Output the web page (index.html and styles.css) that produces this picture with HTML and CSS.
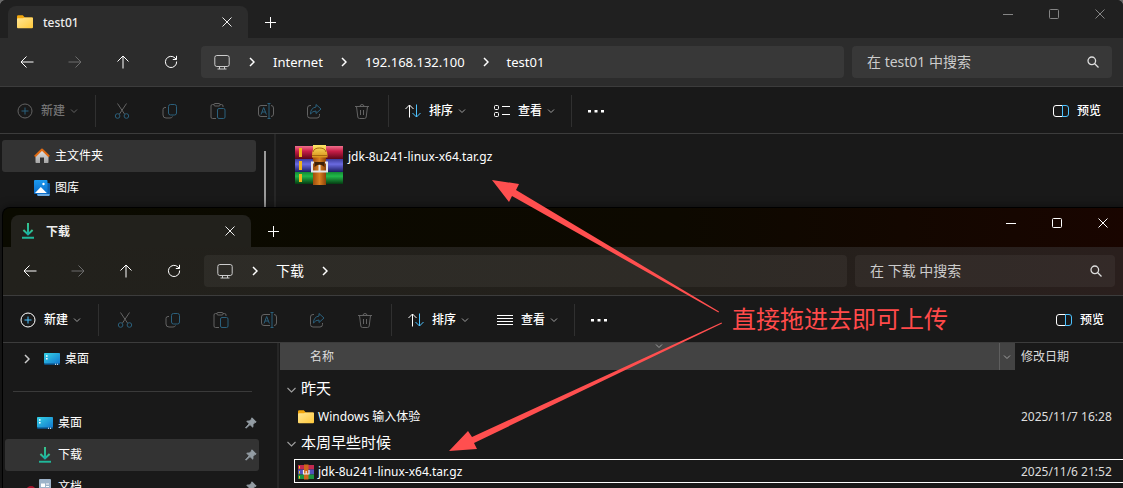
FILE: index.html
```html
<!DOCTYPE html>
<html lang="zh-CN">
<head>
    <meta charset="UTF-8">
    <meta name="viewport" content="width=device-width, initial-scale=1.0">
    <title>test01</title>
    <link rel="stylesheet" href="styles.css">
</head>
<body>
    <!-- 图标 -->
    <svg class="sprite" aria-hidden="true">
        <defs>
            <linearGradient id="g-folder" x1="0" y1="0" x2="1" y2="1"><stop offset="0" stop-color="#ffe694"/><stop offset="1" stop-color="#ffc83a"/></linearGradient>
            <linearGradient id="g-down" x1="0" y1="0" x2="0" y2="1"><stop offset="0" stop-color="#3ac48a"/><stop offset="1" stop-color="#16b0a6"/></linearGradient>
            <linearGradient id="g-desk" x1="0" y1="0" x2="1" y2="1"><stop offset="0" stop-color="#35d3e6"/><stop offset="1" stop-color="#1277cf"/></linearGradient>
            <linearGradient id="g-home" x1="0" y1="0" x2="0" y2="1"><stop offset="0" stop-color="#e6e6e6"/><stop offset="1" stop-color="#a5a5a5"/></linearGradient>
            <linearGradient id="g-pic" x1="0" y1="0" x2="0" y2="1"><stop offset="0" stop-color="#1c9af0"/><stop offset="1" stop-color="#0a6cc8"/></linearGradient>
            <linearGradient id="g-red" x1="0" y1="0" x2="0" y2="1"><stop offset="0" stop-color="#f0708c"/><stop offset=".4" stop-color="#c81e48"/><stop offset="1" stop-color="#5c0618"/></linearGradient>
            <linearGradient id="g-blue" x1="0" y1="0" x2="0" y2="1"><stop offset="0" stop-color="#3c3c9c"/><stop offset=".4" stop-color="#6a6ae0"/><stop offset="1" stop-color="#1c1c60"/></linearGradient>
            <linearGradient id="g-green" x1="0" y1="0" x2="0" y2="1"><stop offset="0" stop-color="#128a34"/><stop offset=".35" stop-color="#22b84a"/><stop offset="1" stop-color="#053c12"/></linearGradient>
            <linearGradient id="g-belt" x1="0" y1="0" x2="1" y2="0"><stop offset="0" stop-color="#9c4c0c"/><stop offset=".5" stop-color="#d88020"/><stop offset="1" stop-color="#8c420a"/></linearGradient>
            <linearGradient id="g-gold" x1="0" y1="0" x2="0" y2="1"><stop offset="0" stop-color="#ffe868"/><stop offset="1" stop-color="#d89018"/></linearGradient>
        </defs>
        <symbol id="folder" viewBox="0 0 16 14">
            <path d="M0 1.5Q0 .3 1.2.3h4.6l2 2.2H15q1 0 1 1V7H0z" fill="#f2a60c"/>
            <path d="M0 4.2Q0 3.3 1 3.3h5L7.6 2.6H15q1 0 1 1v8.7q0 1-1 1H1q-1 0-1-1z" fill="url(#g-folder)"/>
        </symbol>
        <symbol id="download" viewBox="0 0 16 16">
            <path d="M3.400 7 8 11.400 12.600 7" fill="none" stroke="url(#g-down)" stroke-width="2"/>
            <path d="M2 13.800h12v1.900H2z" fill="#20b89a"/>
            <path d="M7 0h2v11H7z" fill="url(#g-down)"/>
        </symbol>
        <symbol id="desktop" viewBox="0 0 16 12">
            <rect width="16" height="12" rx="1" fill="#0a4a7c"/>
            <rect width="16" height="10.6" rx="1" fill="url(#g-desk)"/>
            <path d="M2 2.2h1.6v1.6H2zM2 5h1.6v1.6H2zM11 10.800h1v1h-1zM13 10.800h1v1h-1z" fill="#fff"/>
        </symbol>
        <symbol id="home" viewBox="0 0 16 16">
            <path d="M1.5 7.5 8 1.5l6.5 6v6.7q0 .8-.8.8H10V9.5H6V15H2.3q-.8 0-.8-.8z" fill="url(#g-home)"/>
            <path d="M.8 8.4 8 1.6l7.2 6.8" fill="none" stroke="#e06a12" stroke-width="2" stroke-linejoin="round"/>
        </symbol>
        <symbol id="gallery" viewBox="0 0 16 16">
            <path d="M3 3h12q1 0 1 1v11q0 1-1 1H4q-1 0-1-1z" fill="#0c5fae"/>
            <path d="M3 14h12.8L15 16H4z" fill="#6aa8e0"/>
            <rect width="13.5" height="14" rx="1" fill="url(#g-pic)"/>
            <path d="M1 13 6.8 7l6 6z" fill="#fff"/>
            <circle cx="9.5" cy="4" r="1.2" fill="#fff"/>
        </symbol>
        <symbol id="doc" viewBox="0 0 16 16">
            <rect x="2" width="12" height="16" rx="1" fill="#9db3c9"/>
            <path d="M4 4.5h4v3.5H4zM9 4.5h3v1H9zM9 7h3v1H9zM4 10h8v1H4z" fill="#fff"/>
        </symbol>
        <symbol id="pin" viewBox="0 0 12 12">
            <path d="M7 .8 11.2 5 9.8 5.6 8 7.4l-.2 2.8L5 7.6 1 11.2.6 10.8 4.2 6.8 1.8 4.2 4.6 4 6.4 2.2z" fill="#939ca3" stroke="#939ca3"/>
        </symbol>
        <symbol id="rar" viewBox="0 0 48 40">
            <rect y="1" width="48" height="13" fill="url(#g-red)"/>
            <rect y="14" width="48" height="13" fill="url(#g-blue)"/>
            <rect y="27" width="48" height="12" fill="url(#g-green)"/>
            <path d="M4 3h3v9H4zM4 16h3v9H4zM4 29h3v8H4z" fill="#f0b41c"/>
            <rect x="18" width="13" height="40" fill="url(#g-belt)"/>
            <path d="M18 0h13v5q1.500 2 1.500 5v2.500H17V10q0-3 1-5z" fill="url(#g-gold)"/>
            <path d="M18 7q1-4 6.500-4T31 7M17 10.500h15.500" fill="none" stroke="#a86a10"/>
            <path d="M19 17.500h-2v9h15v-9h-2" fill="none" stroke="#e4e4e8" stroke-width="2"/>
            <path d="M19.500 17v5q5-5 10 0v-5z" fill="#3c2008"/>
            <path d="M24.500 20v7" stroke="#e4e4e8" stroke-width="2"/>
        </symbol>
        <symbol id="rar-small" viewBox="0 0 16 16">
            <path d="M0 1h16v4.500H0z" fill="#c42a50"/><path d="M0 5.500h16v5H0z" fill="#5252bc"/><path d="M0 10.500h16V15H0z" fill="#1c9440"/>
            <path d="M1 2h1v2.500H1zM1 7h1v2.500H1zM1 12h1v2.500H1z" fill="#f4c020"/>
            <path d="M6 .5h4.500v15H6z" fill="#d0661c"/>
            <path d="M5.500 6v4h5.500V6M8.200 7v3" fill="none" stroke="#eee" stroke-width="1.200"/>
        </symbol>
        <symbol id="close" viewBox="0 0 10 10"><path d="M.5.5l9 9M9.500.5l-9 9"/></symbol>
        <symbol id="plus" viewBox="0 0 11 11"><path d="M5.500 0v11M0 5.500h11"/></symbol>
        <symbol id="min" viewBox="0 0 10 10"><path d="M0 5.500h10"/></symbol>
        <symbol id="max" viewBox="0 0 10 10"><rect x=".5" y=".5" width="9" height="9" rx="1"/></symbol>
        <symbol id="left" viewBox="0 0 14 12"><path d="M13.500 6H1M6.500.5 1 6l5.500 5.500"/></symbol>
        <symbol id="right" viewBox="0 0 14 12"><path d="M.5 6H13M7.500.5 13 6l-5.500 5.500"/></symbol>
        <symbol id="up" viewBox="0 0 12 14"><path d="M6 13.500V1M.5 6.500 6 1l5.500 5.500"/></symbol>
        <symbol id="refresh" viewBox="0 0 14 14"><path d="M12.600 6.500A5.600 5.600 0 1 1 11 3l1.400 1.500M12.500.8v3.700H8.800"/></symbol>
        <symbol id="monitor" viewBox="0 0 16 16"><rect x=".8" y="1.500" width="14.400" height="11" rx="2"/><path d="M5.500 13v2M10.500 13v2M3.500 15h9"/></symbol>
        <symbol id="chev-r" viewBox="0 0 6 10"><path d="M1 1l4 4-4 4"/></symbol>
        <symbol id="chev-d" viewBox="0 0 8 6"><path d="M1 1.500l3 3 3-3"/></symbol>
        <symbol id="search" viewBox="0 0 12 12"><circle cx="4.800" cy="4.800" r="3.800"/><path d="M7.500 7.500l4 4"/></symbol>
        <symbol id="new" viewBox="0 0 16 16"><circle cx="8" cy="8" r="7"/><path class="accent" d="M8 4.500v7M4.500 8h7"/></symbol>
        <symbol id="cut" viewBox="0 0 16 16"><path d="M3.500.5l7 10.500M12.500.5l-7 10.500"/><circle class="accent" cx="3.600" cy="13" r="2.300"/><circle class="accent" cx="12.400" cy="13" r="2.300"/></symbol>
        <symbol id="copy" viewBox="0 0 16 16"><path d="M4 4.500H3q-2 0-2 2V12q0 3 3 3h4q2 0 2.500-1.500"/><rect class="accent" x="6.500" y="1.500" width="8" height="10.500" rx="2"/></symbol>
        <symbol id="paste" viewBox="0 0 16 16"><path d="M6 15.500H2.500q-1.500 0-1.500-1.500V3q0-1.500 1.500-1.500H4M10 1.500h1.500Q13 1.500 13 3v1"/><rect x="4" y=".5" width="6" height="2.500" rx="1"/><rect class="accent" x="7.500" y="5.500" width="7.500" height="10" rx="1.500"/></symbol>
        <symbol id="rename" viewBox="0 0 16 16"><path d="M9 2.500H3q-2.500 0-2.500 2.500v6q0 2.500 2.500 2.500h6M13 2.500q2.500 0 2.500 2.500v6q0 2.500-2.500 2.500"/><path class="accent" d="M11 .5v15M9.500.5h3M9.500 15.500h3M3 11.500 5.700 4.500 8.400 11.500M4 9h3.400"/></symbol>
        <symbol id="share" viewBox="0 0 16 16"><path d="M5 2.500H4Q1.500 2.500 1.500 5v7.500Q1.500 15 4 15h7q2.500 0 2.500-2.500V11"/><path class="accent" d="M10 1.500 15 6l-5 4.500V8Q6.500 8 4.500 11q0-6 5.500-7z"/></symbol>
        <symbol id="trash" viewBox="0 0 16 16"><path d="M1 3.500h14M6 3.500q0-2 2-2t2 2M2.500 3.500 3.800 14q.2 1.500 1.700 1.500h5q1.500 0 1.700-1.500l1.300-10.500M6.500 7v5M9.500 7v5"/></symbol>
        <symbol id="sort" viewBox="0 0 16 14"><path d="M4.500 13.500V1M.5 5l4-4 4 4"/><path class="accent" d="M11.500.5V13M7.500 9l4 4 4-4"/></symbol>
        <symbol id="tiles" viewBox="0 0 16 14"><rect x=".5" y="1.500" width="4" height="4" rx="1"/><rect x=".5" y="8.500" width="4" height="4" rx="1"/><path d="M8 2.500h8M8 10.500h8"/></symbol>
        <symbol id="lines" viewBox="0 0 16 14"><path d="M0 2.500h16M0 5.500h16M0 8.500h16M0 11.500h16"/></symbol>
        <symbol id="dots" viewBox="0 0 16 4"><path class="dot" d="M0 1h3v2.500H0zM6.500 1h3v2.500h-3zM13 1h3v2.500h-3z"/></symbol>
        <symbol id="pane" viewBox="0 0 16 12"><path d="M9.500.5H3Q.5.500.5 3v6Q.5 11.500 3 11.500h6.500"/><path class="accent" d="M9.500.5H13q2.500 0 2.500 2.500v6q0 2.500-2.500 2.500H9.500z"/></symbol>
    </svg>

    <!-- 后面的窗口 -->
    <section class="window back">
        <header class="titlebar">
            <div class="tab">
                <svg class="i16"><use href="#folder"/></svg>
                <span class="tab-name">test01</span>
                <button class="tab-close" aria-label="关闭标签页"><svg class="line i10"><use href="#close"/></svg></button>
            </div>
            <button class="add" aria-label="新标签页"><svg class="line i11"><use href="#plus"/></svg></button>
            <div class="controls">
                <button aria-label="最小化"><svg class="line i10"><use href="#min"/></svg></button>
                <button aria-label="最大化"><svg class="line i10"><use href="#max"/></svg></button>
                <button aria-label="关闭"><svg class="line i10"><use href="#close"/></svg></button>
            </div>
        </header>
        <div class="navbar">
            <button aria-label="后退"><svg class="line i14"><use href="#left"/></svg></button>
            <button aria-label="前进" disabled><svg class="line i14"><use href="#right"/></svg></button>
            <button aria-label="上移"><svg class="line i14"><use href="#up"/></svg></button>
            <button aria-label="刷新"><svg class="line i14"><use href="#refresh"/></svg></button>
            <nav class="address">
                <svg class="line i16"><use href="#monitor"/></svg>
                <svg class="line chev"><use href="#chev-r"/></svg>
                <a href="#">Internet</a>
                <svg class="line chev"><use href="#chev-r"/></svg>
                <a href="#">192.168.132.100</a>
                <svg class="line chev"><use href="#chev-r"/></svg>
                <a href="#">test01</a>
            </nav>
            <label class="search">
                <input type="text" placeholder="在 test01 中搜索" aria-label="搜索">
                <svg class="line i12"><use href="#search"/></svg>
            </label>
        </div>
        <div class="toolbar">
            <button class="cmd new" disabled><svg class="line i16"><use href="#new"/></svg>新建<svg class="line down"><use href="#chev-d"/></svg></button>
            <div class="group">
                <button aria-label="剪切" disabled><svg class="line i16"><use href="#cut"/></svg></button>
                <button aria-label="复制" disabled><svg class="line i16"><use href="#copy"/></svg></button>
                <button aria-label="粘贴" disabled><svg class="line i16"><use href="#paste"/></svg></button>
                <button aria-label="重命名" disabled><svg class="line i16"><use href="#rename"/></svg></button>
                <button aria-label="共享" disabled><svg class="line i16"><use href="#share"/></svg></button>
                <button aria-label="删除" disabled><svg class="line i16"><use href="#trash"/></svg></button>
            </div>
            <div class="group cmds">
                <button class="cmd"><svg class="line i16"><use href="#sort"/></svg>排序<svg class="line down"><use href="#chev-d"/></svg></button>
                <button class="cmd"><svg class="line i16"><use href="#tiles"/></svg>查看<svg class="line down"><use href="#chev-d"/></svg></button>
            </div>
            <div class="group more">
                <button aria-label="更多"><svg class="i16"><use href="#dots"/></svg></button>
            </div>
            <button class="cmd preview"><svg class="line i16"><use href="#pane"/></svg>预览</button>
        </div>
        <div class="content">
            <aside class="side">
                <a class="item on" href="#"><svg class="i16"><use href="#home"/></svg>主文件夹</a>
                <a class="item" href="#"><svg class="i16"><use href="#gallery"/></svg>图库</a>
                <div class="scroll"></div>
            </aside>
            <main class="tiles">
                <a class="file" href="#"><svg class="big"><use href="#rar"/></svg>jdk-8u241-linux-x64.tar.gz</a>
            </main>
        </div>
    </section>

    <!-- 前面的窗口 -->
    <section class="window front">
        <header class="titlebar">
            <div class="tab">
                <svg class="i16"><use href="#download"/></svg>
                <span class="tab-name">下载</span>
                <button class="tab-close" aria-label="关闭标签页"><svg class="line i10"><use href="#close"/></svg></button>
            </div>
            <button class="add" aria-label="新标签页"><svg class="line i11"><use href="#plus"/></svg></button>
            <div class="controls">
                <button aria-label="最小化"><svg class="line i10"><use href="#min"/></svg></button>
                <button aria-label="最大化"><svg class="line i10"><use href="#max"/></svg></button>
                <button aria-label="关闭"><svg class="line i10"><use href="#close"/></svg></button>
            </div>
        </header>
        <div class="navbar">
            <button aria-label="后退"><svg class="line i14"><use href="#left"/></svg></button>
            <button aria-label="前进" disabled><svg class="line i14"><use href="#right"/></svg></button>
            <button aria-label="上移"><svg class="line i14"><use href="#up"/></svg></button>
            <button aria-label="刷新"><svg class="line i14"><use href="#refresh"/></svg></button>
            <nav class="address">
                <svg class="line i16"><use href="#monitor"/></svg>
                <svg class="line chev"><use href="#chev-r"/></svg>
                <a class="cn" href="#">下载</a>
                <svg class="line chev"><use href="#chev-r"/></svg>
            </nav>
            <label class="search">
                <input type="text" placeholder="在 下载 中搜索" aria-label="搜索">
                <svg class="line i12"><use href="#search"/></svg>
            </label>
        </div>
        <div class="toolbar">
            <button class="cmd new"><svg class="line i16"><use href="#new"/></svg>新建<svg class="line down"><use href="#chev-d"/></svg></button>
            <div class="group">
                <button aria-label="剪切" disabled><svg class="line i16"><use href="#cut"/></svg></button>
                <button aria-label="复制" disabled><svg class="line i16"><use href="#copy"/></svg></button>
                <button aria-label="粘贴" disabled><svg class="line i16"><use href="#paste"/></svg></button>
                <button aria-label="重命名" disabled><svg class="line i16"><use href="#rename"/></svg></button>
                <button aria-label="共享" disabled><svg class="line i16"><use href="#share"/></svg></button>
                <button aria-label="删除" disabled><svg class="line i16"><use href="#trash"/></svg></button>
            </div>
            <div class="group cmds">
                <button class="cmd"><svg class="line i16"><use href="#sort"/></svg>排序<svg class="line down"><use href="#chev-d"/></svg></button>
                <button class="cmd"><svg class="line i16"><use href="#lines"/></svg>查看<svg class="line down"><use href="#chev-d"/></svg></button>
            </div>
            <div class="group more">
                <button aria-label="更多"><svg class="i16"><use href="#dots"/></svg></button>
            </div>
            <button class="cmd preview"><svg class="line i16"><use href="#pane"/></svg>预览</button>
        </div>
        <div class="content">
            <aside class="side">
                <a class="item tree" href="#"><svg class="line chev"><use href="#chev-r"/></svg><svg class="i16"><use href="#desktop"/></svg>桌面</a>
                <hr>
                <a class="item" href="#"><svg class="i16"><use href="#desktop"/></svg>桌面<svg class="pin"><use href="#pin"/></svg></a>
                <a class="item on" href="#"><svg class="i16"><use href="#download"/></svg>下载<svg class="pin"><use href="#pin"/></svg></a>
                <a class="item" href="#"><svg class="i16"><use href="#doc"/></svg>文档<svg class="pin"><use href="#pin"/></svg><i class="badge"></i></a>
            </aside>
            <main class="list">
                <table>
                    <colgroup><col class="c-gap"><col><col class="c-menu"><col class="c-date"></colgroup>
                    <thead>
                        <tr>
                            <th class="name" colspan="2">名称<svg class="line down sorted"><use href="#chev-d"/></svg></th>
                            <th class="menu"><svg class="line down"><use href="#chev-d"/></svg></th>
                            <th>修改日期</th>
                        </tr>
                    </thead>
                    <tbody>
                        <tr class="head first"><th colspan="4"><svg class="line fold"><use href="#chev-d"/></svg>昨天</th></tr>
                        <tr>
                            <td></td>
                            <td colspan="2"><svg class="i16"><use href="#folder"/></svg>Windows 输入体验</td>
                            <td>2025/11/7 16:28</td>
                        </tr>
                        <tr class="head"><th colspan="4"><svg class="line fold"><use href="#chev-d"/></svg>本周早些时候</th></tr>
                        <tr class="picked">
                            <td></td>
                            <td colspan="2"><svg class="i16"><use href="#rar-small"/></svg>jdk-8u241-linux-x64.tar.gz</td>
                            <td>2025/11/6 21:52</td>
                        </tr>
                    </tbody>
                </table>
            </main>
        </div>
    </section>

    <!-- 标注 -->
    <svg class="arrows" aria-hidden="true">
        <path d="M492 180 519 184 516 190 719 311.500 718.500 312.500 512 196 509 202z"/>
        <path d="M449 451 468 431 472 437 721.500 322.500 722 323.500 474 443 477 449z"/>
    </svg>
    <p class="note">直接拖进去即可上传</p>
</body>
</html>
```

FILE: styles.css
```css
*{
    margin: 0;
    padding: 0;
    box-sizing: border-box;
}
body{
    position: relative;
    height: 100vh;
    overflow: hidden;
    background: #6a6a6a;
    color: #fff;
    font: 12px/16px "Noto Sans", "Noto Sans CJK SC", sans-serif;
}
a{
    color: inherit;
    text-decoration: none;
}
button{
    display: flex;
    align-items: center;
    justify-content: center;
    background: none;
    border: 0;
    color: inherit;
    font: inherit;
}
svg{
    flex: none;
    display: block;
}
.sprite{
    position: absolute;
    width: 0;
    height: 0;
}
.line{
    fill: none;
    stroke: currentColor;
}
.accent{
    stroke: var(--accent, #4cc2ff);
}
.dot{
    fill: #fff;
}
.i10{ width: 10px; height: 10px; }
.i11{ width: 11px; height: 11px; }
.i12{ width: 12px; height: 12px; }
.i14{ width: 14px; height: 14px; }
.i16{ width: 16px; height: 16px; }
.chev{ width: 6px; height: 10px; stroke-width: 1.5; }
.down{ width: 8px; height: 6px; color: #a0a0a0; }

/* 窗口 */
.window{
    display: flex;
    flex-direction: column;
    overflow: hidden;
    background: #191919;
}
.back{
    height: 100%;
    border-radius: 6px 6px 0 0;
}
/* 右边略微超出屏幕 */
.front{
    position: absolute;
    top: 207px;
    left: 2px;
    right: -3px;
    bottom: 0;
    padding-top: 1px;
    border: solid #000;
    border-width: 1px 0 0 1px;
    border-radius: 8px 0 0 0;
    box-shadow: 0 0 10px rgba(0,0,0,0.5);
    background: linear-gradient(90deg, #0a0a00, #0d0900 60%, #190500) top / 100% 39px no-repeat #191919;
}

/* 标题栏 */
.titlebar{
    display: flex;
    flex: none;
    height: 38px;
    padding-left: 8px;
}
.back .titlebar{
    background: #202020;
}
.tab{
    display: flex;
    align-items: center;
    width: 240px;
    margin-top: 6px;
    padding: 0 8px 0 9px;
    border-radius: 8px 8px 0 0;
    background: #2c2c2c;
    color: #eee;
}
.front .tab{
    background: #22211c;
}
.tab-name{
    flex: 1;
    margin-left: 10px;
    padding-top: 2px;
    font-weight: 500;
}
.front .tab-name{
    font-weight: 700;
}
.tab-close{
    width: 26px;
    height: 24px;
}
.add{
    width: 44px;
    padding-top: 6px;
}
.controls{
    display: flex;
    height: 27px;
    margin-left: auto;
}
.controls button{
    width: 46px;
}
.back .controls{
    color: #858585;
}

/* 导航栏 */
.navbar{
    display: flex;
    flex: none;
    align-items: center;
    height: 49px;
    padding: 0 11px 0 7px;
    border-bottom: 1px solid #3c3c3c;
    background: #2c2c2c;
}
.front .navbar{
    background: linear-gradient(90deg, #22211c, #23201b 60%, #2a1f1d);
}
.navbar > button{
    width: 40px;
    height: 32px;
    margin-right: 8px;
}
.navbar > button:disabled{
    color: #6c6c6c;
}
.address{
    display: flex;
    flex: 1;
    align-items: center;
    gap: 18px;
    height: 32px;
    margin: 0 8px 0 2px;
    padding-left: 13px;
    border-radius: 4px;
    background: #383838;
    font-size: 13px;
}
.front .address, .front .search{
    background: rgba(255,255,255,0.05);
}
.address .i16{
    margin-right: 1px;
    color: #ccc;
}
.address .cn{
    font-size: 14px;
}
.search{
    display: flex;
    align-items: center;
    width: 260px;
    height: 32px;
    padding: 0 13px 0 15px;
    border-radius: 4px;
    background: #383838;
    color: #ddd;
}
.search .line{
    stroke-width: 1.3;
}
.search input{
    flex: 1;
    min-width: 0;
    background: none;
    border: 0;
    outline: 0;
    color: #fff;
    font: 14px/20px "Noto Sans", "Noto Sans CJK SC", sans-serif;
}
.search input::placeholder{
    color: #ccc;
}

/* 工具栏 */
.toolbar{
    display: flex;
    flex: none;
    align-items: center;
    height: 47px;
    padding: 2px 22px 0 17px;
    border-bottom: 1px solid #3c3c3c;
    font-weight: 500;
}
.toolbar button:disabled{
    --accent: #2b607c;
    color: #747474;
}
.toolbar button:disabled .line{
    color: #636363;
}
.cmd{
    gap: 8px;
    height: 32px;
}
.cmd .down{
    margin-left: -3px;
}
.new{
    margin-right: 17px;
}
.group{
    display: flex;
    align-items: center;
    height: 32px;
    padding: 0 2px;
    border-left: 1px solid #303030;
}
.group > button{
    width: 48px;
    height: 32px;
}
.group > .cmd{
    width: auto;
}
.group.cmds{
    gap: 28px;
    padding: 0 16px;
}
.group.more{
    padding: 0;
}
.preview{
    margin-left: auto;
}

/* 内容 */
.content{
    display: flex;
    flex: 1;
    min-height: 0;
}
.side{
    position: relative;
    flex: none;
    width: 276px;
    padding: 6px 18px 0 2px;
    border-right: 2px solid #262626;
}
.item{
    position: relative;
    display: flex;
    align-items: center;
    gap: 5px;
    height: 32px;
    padding-left: 32px;
    border-radius: 3px;
}
.item.on{
    background: #333;
}
.scroll{
    position: absolute;
    top: 17px;
    right: 8px;
    bottom: 0;
    width: 2px;
    background: #9a9a9a;
}
.front .side{
    padding-top: 0;
}
.item.tree{
    padding-left: 19px;
}
.tree .chev{
    margin-right: 9px;
    color: #ccc;
}
.side hr{
    margin: 16px 7px 15px 8px;
    border: 0;
    border-top: 1px solid #3a3a3a;
}
.pin{
    width: 12px;
    height: 12px;
    margin: 0 2px 0 auto;
}
.badge{
    position: absolute;
    left: 21px;
    top: 15px;
    width: 10px;
    height: 10px;
    border-radius: 50%;
    background: #a8142c;
}
.tiles{
    padding: 11px 19px;
}
.file{
    display: flex;
    gap: 5px;
    line-height: 24px;
}
.big{
    width: 48px;
    height: 40px;
}

/* 文件列表 */
.list{
    flex: 1;
    min-width: 0;
    padding-left: 1px;
}
table{
    width: 100%;
    table-layout: fixed;
    border-collapse: separate;
    border-spacing: 0;
}
.c-gap{ width: 14px; }
.c-menu{ width: 16px; }
.c-date{ width: 111px; }
th{
    font-weight: 400;
    text-align: left;
}
thead th{
    position: relative;
    height: 27px;
    padding-left: 6px;
    color: #ddd;
}
thead .name{
    padding-left: 30px;
    background: #434343;
}
thead .menu{
    padding-left: 3px;
    border-left: 1px solid #5e5e5e;
    background: #434343;
}
.sorted{
    position: absolute;
    top: 0;
    left: 375px;
}
.head th{
    height: 31px;
    padding: 0 0 3px 6px;
    font-size: 15px;
}
.head.first th{
    height: 34px;
    padding: 2px 0 0 6px;
}
.fold{
    display: inline-block;
    width: 11px;
    height: 8px;
    margin-right: 4px;
    stroke-width: 0.8;
    color: #a0a0a0;
}
td{
    height: 24px;
    padding-top: 2px;
    border: solid transparent;
    border-width: 1px 0;
    white-space: nowrap;
}
td:nth-child(2){
    padding-left: 3px;
    border-left-width: 1px;
}
td:last-child{
    padding-left: 6px;
    color: #ddd;
}
td .i16{
    display: inline-block;
    margin: -2px 4px 0 0;
    vertical-align: middle;
}
.picked td + td{
    border-color: #fff;
}

/* 标注 */
.arrows{
    position: absolute;
    left: 0;
    top: 0;
    width: 730px;
    height: 488px;
    fill: #ff4f4f;
}
.note{
    position: absolute;
    left: 732px;
    top: 304px;
    color: #ff4a4a;
    font-size: 24px;
    line-height: 30px;
}
```
